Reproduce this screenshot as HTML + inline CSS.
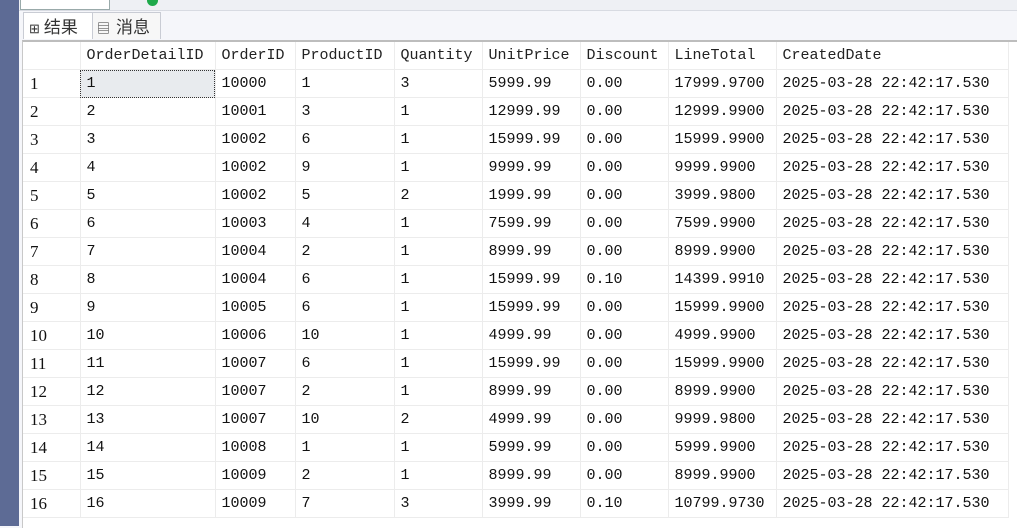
<!DOCTYPE html><html><head><style>
body{margin:0;width:1017px;height:526px;overflow:hidden;background:#f5f6fa;position:relative;font-family:"Liberation Mono","Noto Sans CJK SC",monospace;}
.strip{position:absolute;left:0;top:0;width:19px;height:526px;background:#5d6b95}
.top{position:absolute;left:19px;top:0;width:998px;height:10px;background:#eef0f4;border-bottom:1px solid #d8dbe2}
.zoom{position:absolute;left:1px;top:-6px;width:88px;height:14px;border:1px solid #9aa;background:#fff}
.dot{position:absolute;left:128px;top:-5px;width:11px;height:11px;border-radius:50%;background:#1ea94a}
.tab{position:absolute;top:12px;height:26px;border:1px solid #c9ccd4;border-bottom:none;background:#fff;font:17px "Noto Sans CJK SC",sans-serif;color:#333;line-height:26px}
.grid{position:absolute;left:22px;top:40px;width:995px;height:486px;background:#fff;border-left:1px solid #c8c8c8;border-top:2px solid #bdbdbd}
table{border-collapse:collapse;position:absolute;left:0;top:0}
td{height:26px;border-right:1px solid #ececec;border-bottom:1px solid #ececec;padding:1px 0 0 6px;font-size:15px;color:#111;white-space:nowrap;vertical-align:middle;line-height:26px}
td:first-child{padding-left:7px;font-family:"Liberation Serif",serif;font-size:17px}
tr.h td{color:#222}
.sel{background:#e8ebee;outline:1px dotted #333;outline-offset:-1px}
</style></head><body>
<div class="strip"></div>
<div class="top"><div class="zoom"></div><div class="dot"></div></div>
<div class="tab" style="left:23px;width:68px;padding-left:0"><span style="font-size:13px;margin:0 4px 0 5px">⊞</span>结果</div>
<div class="tab" style="left:92px;width:67px;background:#f7f7f7"><span style="font-size:13px;margin:0 6px 0 4px">▤</span>消息</div>
<div class="grid"><table>
<colgroup><col style="width:57px"><col style="width:135px"><col style="width:80px"><col style="width:99px"><col style="width:88px"><col style="width:98px"><col style="width:88px"><col style="width:108px"><col style="width:232px"></colgroup>
<tr class="h"><td></td><td>OrderDetailID</td><td>OrderID</td><td>ProductID</td><td>Quantity</td><td>UnitPrice</td><td>Discount</td><td>LineTotal</td><td>CreatedDate</td></tr>
<tr><td>1</td><td class="sel">1</td><td>10000</td><td>1</td><td>3</td><td>5999.99</td><td>0.00</td><td>17999.9700</td><td>2025-03-28 22:42:17.530</td></tr>
<tr><td>2</td><td>2</td><td>10001</td><td>3</td><td>1</td><td>12999.99</td><td>0.00</td><td>12999.9900</td><td>2025-03-28 22:42:17.530</td></tr>
<tr><td>3</td><td>3</td><td>10002</td><td>6</td><td>1</td><td>15999.99</td><td>0.00</td><td>15999.9900</td><td>2025-03-28 22:42:17.530</td></tr>
<tr><td>4</td><td>4</td><td>10002</td><td>9</td><td>1</td><td>9999.99</td><td>0.00</td><td>9999.9900</td><td>2025-03-28 22:42:17.530</td></tr>
<tr><td>5</td><td>5</td><td>10002</td><td>5</td><td>2</td><td>1999.99</td><td>0.00</td><td>3999.9800</td><td>2025-03-28 22:42:17.530</td></tr>
<tr><td>6</td><td>6</td><td>10003</td><td>4</td><td>1</td><td>7599.99</td><td>0.00</td><td>7599.9900</td><td>2025-03-28 22:42:17.530</td></tr>
<tr><td>7</td><td>7</td><td>10004</td><td>2</td><td>1</td><td>8999.99</td><td>0.00</td><td>8999.9900</td><td>2025-03-28 22:42:17.530</td></tr>
<tr><td>8</td><td>8</td><td>10004</td><td>6</td><td>1</td><td>15999.99</td><td>0.10</td><td>14399.9910</td><td>2025-03-28 22:42:17.530</td></tr>
<tr><td>9</td><td>9</td><td>10005</td><td>6</td><td>1</td><td>15999.99</td><td>0.00</td><td>15999.9900</td><td>2025-03-28 22:42:17.530</td></tr>
<tr><td>10</td><td>10</td><td>10006</td><td>10</td><td>1</td><td>4999.99</td><td>0.00</td><td>4999.9900</td><td>2025-03-28 22:42:17.530</td></tr>
<tr><td>11</td><td>11</td><td>10007</td><td>6</td><td>1</td><td>15999.99</td><td>0.00</td><td>15999.9900</td><td>2025-03-28 22:42:17.530</td></tr>
<tr><td>12</td><td>12</td><td>10007</td><td>2</td><td>1</td><td>8999.99</td><td>0.00</td><td>8999.9900</td><td>2025-03-28 22:42:17.530</td></tr>
<tr><td>13</td><td>13</td><td>10007</td><td>10</td><td>2</td><td>4999.99</td><td>0.00</td><td>9999.9800</td><td>2025-03-28 22:42:17.530</td></tr>
<tr><td>14</td><td>14</td><td>10008</td><td>1</td><td>1</td><td>5999.99</td><td>0.00</td><td>5999.9900</td><td>2025-03-28 22:42:17.530</td></tr>
<tr><td>15</td><td>15</td><td>10009</td><td>2</td><td>1</td><td>8999.99</td><td>0.00</td><td>8999.9900</td><td>2025-03-28 22:42:17.530</td></tr>
<tr><td>16</td><td>16</td><td>10009</td><td>7</td><td>3</td><td>3999.99</td><td>0.10</td><td>10799.9730</td><td>2025-03-28 22:42:17.530</td></tr>
</table></div>
</body></html>
